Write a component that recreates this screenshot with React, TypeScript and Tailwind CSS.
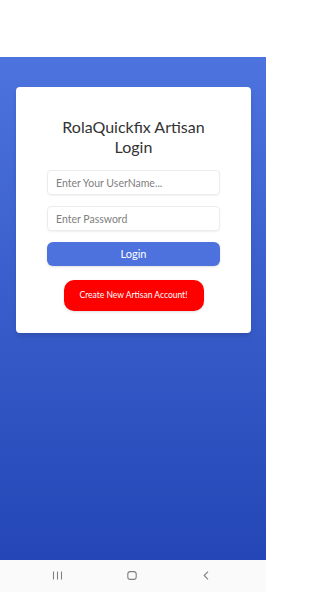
import { useState } from "react";

export default function App() {
  const [username, setUsername] = useState("");
  const [password, setPassword] = useState("");

  return (
    <div
      className="w-[266px] h-[592px] flex flex-col bg-white overflow-hidden"
      style={{ fontFamily: "Lato, 'Open Sans', sans-serif" }}
    >
      {/* status bar space */}
      <div className="h-[57px] bg-white" />

      {/* main */}
      <div className="flex-1 bg-gradient-to-b from-[#4d73de] to-[#2446b6] pt-[30px] pl-4 pr-[15px]">
        <div className="bg-white rounded-[4px] shadow-md h-[246px] flex flex-col items-center pt-[30px]">
          <h1 className="text-[16px] leading-[20px] text-[#333] text-center font-normal">
            RolaQuickfix Artisan
            <br />
            Login
          </h1>

          <div className="w-[173px] mt-[13px] flex flex-col gap-[11px]">
            <input
              value={username}
              onChange={(e) => setUsername(e.target.value)}
              placeholder="Enter Your UserName..."
              className="h-[25px] px-[8px] text-[10.5px] rounded-[4px] border border-[#ececec] shadow-[0_1px_2px_rgba(0,0,0,0.06)] outline-none placeholder:text-[#808080]"
            />
            <input
              type="password"
              value={password}
              onChange={(e) => setPassword(e.target.value)}
              placeholder="Enter Password"
              className="h-[25px] px-[8px] text-[10.5px] rounded-[4px] border border-[#ececec] shadow-[0_1px_2px_rgba(0,0,0,0.06)] outline-none placeholder:text-[#808080]"
            />
            <button className="h-[24px] rounded-[6px] bg-[#4d72dd] text-white text-[11px] shadow-sm">
              Login
            </button>
          </div>

          <button className="mt-[14px] w-[140px] h-[31px] rounded-[10px] bg-[#ff0000] text-white text-[8.5px] shadow-sm">
            Create New Artisan Account!
          </button>
        </div>
      </div>

      {/* nav bar */}
      <div className="h-[32px] bg-[#fafafa] flex items-center pl-[52px] pb-[1px]">
        <svg width="11" height="9" viewBox="0 0 11 9" fill="none" stroke="#808080" strokeWidth="1.1">
          <path d="M1.5 0.5v8M5.5 0.5v8M9.5 0.5v8" />
        </svg>
        <svg className="ml-[64px]" width="10" height="9" viewBox="0 0 10 9" fill="none" stroke="#808080" strokeWidth="1.1">
          <rect x="0.8" y="0.6" width="8.4" height="7.8" rx="2.5" />
        </svg>
        <svg className="ml-[66px]" width="6" height="9" viewBox="0 0 6 9" fill="none" stroke="#808080" strokeWidth="1.1">
          <path d="M5 0.7L1.2 4.5 5 8.3" />
        </svg>
      </div>
    </div>
  );
}
